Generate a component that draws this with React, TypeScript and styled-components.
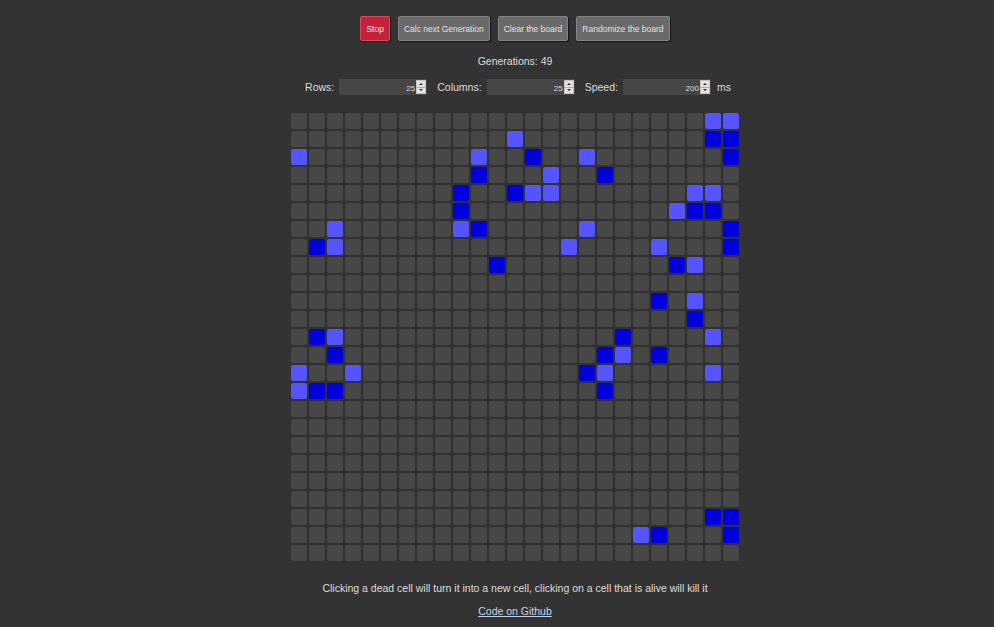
import React, { useState } from 'react'
import styled, { createGlobalStyle } from 'styled-components'

const GlobalStyle = createGlobalStyle`
  html, body {
    margin: 0;
    padding: 0;
    background: #333333;
  }
  body {
    font-family: 'Liberation Sans', Arial, sans-serif;
    color: #dddddd;
  }
`

const Page = styled.div`
  display: flex;
  flex-direction: column;
  align-items: center;
  padding: 16px 0 0 36px;
`

const Toolbar = styled.div`
  display: flex;
  gap: 8px;
`

const Button = styled.button<{ $danger?: boolean }>`
  height: 25px;
  padding: 0 5px;
  font-family: 'Liberation Sans', Arial, sans-serif;
  font-size: 8.5px;
  color: ${({ $danger }) => ($danger ? '#f2e6e8' : '#e2e2e2')};
  background: ${({ $danger }) => ($danger ? '#c4213a' : '#6a6a6a')};
  border: 1px solid ${({ $danger }) => ($danger ? '#d84a5e' : '#858585')};
  border-radius: 2px;
  box-shadow: 1px 1px 1px #151515;
  cursor: pointer;
`

const Generations = styled.div`
  margin-top: 14px;
  font-size: 10.5px;
  line-height: 12px;
`

const Controls = styled.div`
  margin: 12px 0 0 6px;
  display: flex;
  align-items: center;
  gap: 10px;
  font-size: 10.5px;
  line-height: 16px;
`

const Field = styled.label`
  display: flex;
  align-items: center;
  gap: 5px;
`

const NumberBox = styled.div`
  position: relative;
  width: 88px;
  height: 16px;
  background: #464646;
`

const NumberInput = styled.input`
  box-sizing: border-box;
  width: 100%;
  height: 100%;
  border: none;
  outline: none;
  background: transparent;
  padding: 0 12px 0 0;
  text-align: right;
  font-family: 'Liberation Sans', Arial, sans-serif;
  font-size: 8px;
  color: #dddddd;
`

const Spinner = styled.div`
  position: absolute;
  right: 1px;
  top: 1px;
  width: 10px;
  height: 14px;
  display: flex;
  flex-direction: column;
  background: #e2e2e2;
  border: 1px solid #c4c4c4;
  box-sizing: border-box;
`

const SpinHalf = styled.div<{ $down?: boolean }>`
  flex: 1;
  display: flex;
  align-items: center;
  justify-content: center;
  border-top: ${({ $down }) => ($down ? '1px solid #aaaaaa' : 'none')};

  &::after {
    content: '';
    border-left: 2px solid transparent;
    border-right: 2px solid transparent;
    ${({ $down }) => ($down ? 'border-top: 2px solid #333;' : 'border-bottom: 2px solid #333;')}
  }
`

const Unit = styled.span`
  margin-left: -4px;
`

const Board = styled.div<{ $cols: number }>`
  margin-top: 18px;
  display: grid;
  grid-template-columns: repeat(${({ $cols }) => $cols}, 16px);
  grid-auto-rows: 16px;
  gap: 2px;
`

const Cell = styled.div<{ $state: number }>`
  border-radius: 2px;
  background: ${({ $state }) =>
    $state === 2 ? '#0000dd' : $state === 1 ? '#5555ff' : '#474747'};
  box-shadow: 0 0 1px #262626;
  cursor: pointer;
`

const Hint = styled.p`
  margin: 21px 0 0;
  font-size: 10.5px;
  line-height: 12px;
`

const GithubLink = styled.a`
  margin-top: 11px;
  font-size: 10.5px;
  line-height: 12px;
  color: #c4d6e8;
  text-decoration: underline;
`

// 1 = newborn (light), 2 = alive (dark)
const alive: [number, number, number][] = [
  [0, 23, 1], [0, 24, 1],
  [1, 12, 1], [1, 23, 2], [1, 24, 2],
  [2, 0, 1], [2, 10, 1], [2, 13, 2], [2, 16, 1], [2, 24, 2],
  [3, 10, 2], [3, 14, 1], [3, 17, 2],
  [4, 9, 2], [4, 12, 2], [4, 13, 1], [4, 14, 1], [4, 22, 1], [4, 23, 1],
  [5, 9, 2], [5, 21, 1], [5, 22, 2], [5, 23, 2],
  [6, 2, 1], [6, 9, 1], [6, 10, 2], [6, 16, 1], [6, 24, 2],
  [7, 1, 2], [7, 2, 1], [7, 15, 1], [7, 20, 1], [7, 24, 2],
  [8, 11, 2], [8, 21, 2], [8, 22, 1],
  [10, 20, 2], [10, 22, 1],
  [11, 22, 2],
  [12, 1, 2], [12, 2, 1], [12, 18, 2], [12, 23, 1],
  [13, 2, 2], [13, 17, 2], [13, 18, 1], [13, 20, 2],
  [14, 0, 1], [14, 3, 1], [14, 16, 2], [14, 17, 1], [14, 23, 1],
  [15, 0, 1], [15, 1, 2], [15, 2, 2], [15, 17, 2],
  [22, 23, 2], [22, 24, 2],
  [23, 19, 1], [23, 20, 2], [23, 24, 2],
]

const ROWS = 25
const COLS = 25

function buildBoard() {
  const board = Array.from({ length: ROWS }, () => Array(COLS).fill(0))
  alive.forEach(([r, c, s]) => {
    board[r][c] = s
  })
  return board
}

function NumberField({ label, value }: { label: string; value: number }) {
  return (
    <Field>
      {label}
      <NumberBox>
        <NumberInput type="text" defaultValue={value} />
        <Spinner>
          <SpinHalf />
          <SpinHalf $down />
        </Spinner>
      </NumberBox>
    </Field>
  )
}

export default function App() {
  const [board, setBoard] = useState(buildBoard)

  const toggle = (r: number, c: number) => {
    setBoard(prev =>
      prev.map((row, ri) => (ri === r ? row.map((v, ci) => (ci === c ? (v ? 0 : 1) : v)) : row)),
    )
  }

  return (
    <Page>
      <GlobalStyle />
      <Toolbar>
        <Button $danger>Stop</Button>
        <Button>Calc next Generation</Button>
        <Button>Clear the board</Button>
        <Button>Randomize the board</Button>
      </Toolbar>
      <Generations>Generations: 49</Generations>
      <Controls>
        <NumberField label="Rows:" value={25} />
        <NumberField label="Columns:" value={25} />
        <NumberField label="Speed:" value={200} />
        <Unit>ms</Unit>
      </Controls>
      <Board $cols={COLS}>
        {board.map((row, r) =>
          row.map((v, c) => <Cell key={`${r}-${c}`} $state={v} onClick={() => toggle(r, c)} />),
        )}
      </Board>
      <Hint>Clicking a dead cell will turn it into a new cell, clicking on a cell that is alive will kill it</Hint>
      <GithubLink href="#">Code on Github</GithubLink>
    </Page>
  )
}
